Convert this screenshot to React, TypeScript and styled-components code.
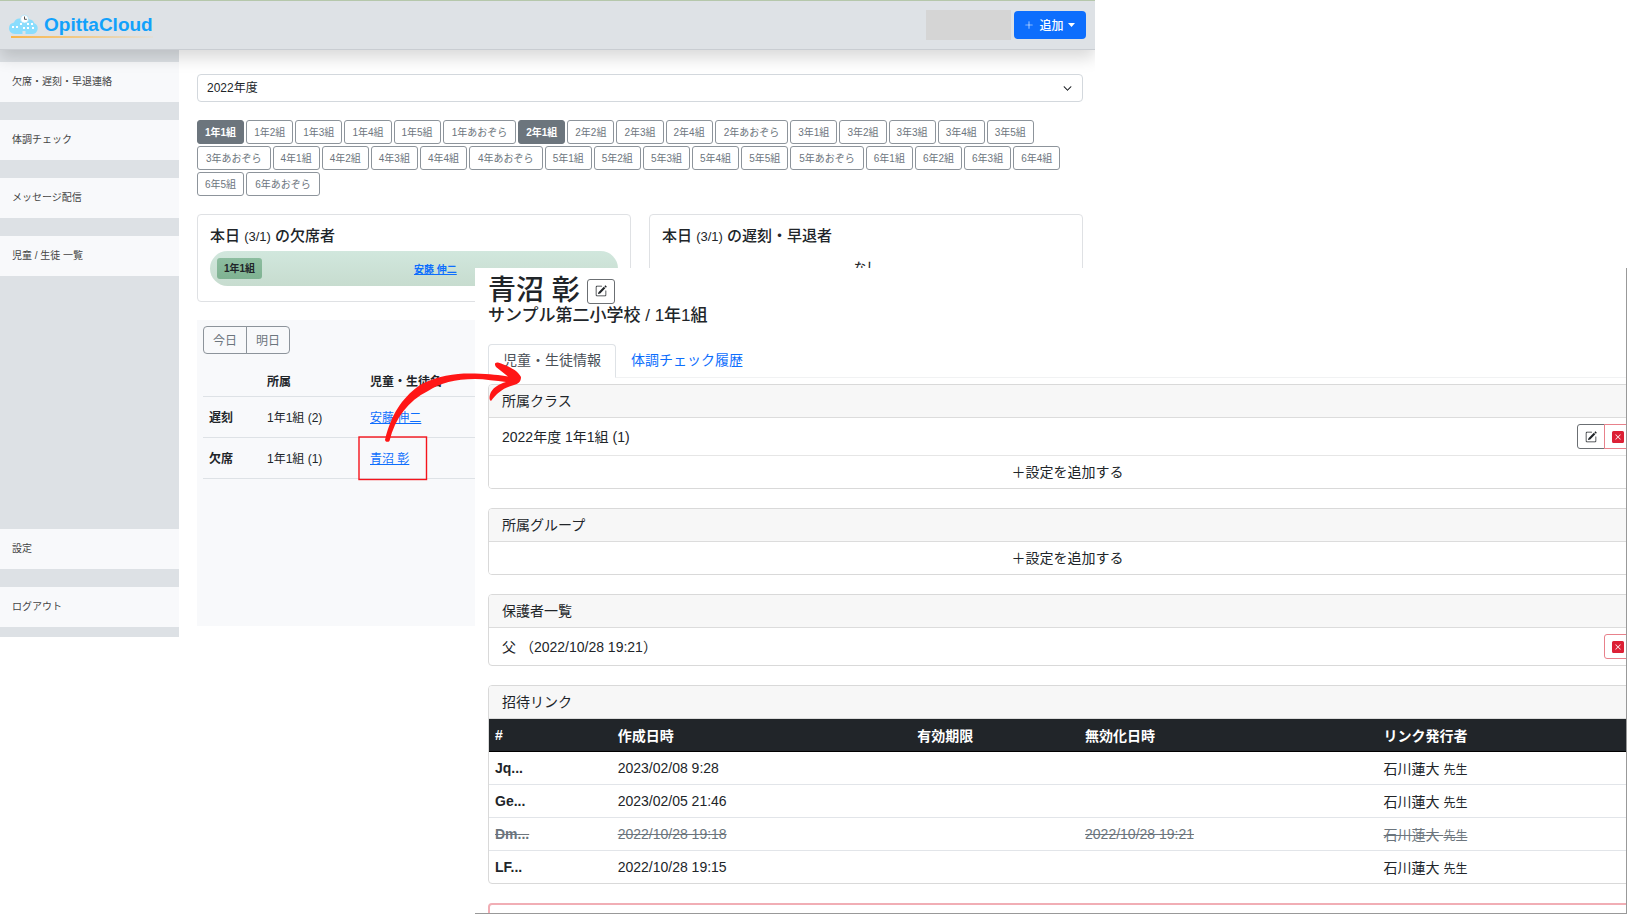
import React from "react";
import styled, { createGlobalStyle, css } from "styled-components";
import { BsPencilSquare, BsXSquareFill, BsPlusLg, BsChevronDown } from "react-icons/bs";

const GlobalStyle = createGlobalStyle`
  *, *::before, *::after { box-sizing: border-box; }
  body {
    margin: 0;
    background: #fff;
    color: #212529;
    font-family: "Liberation Sans", "Noto Sans CJK JP", sans-serif;
    font-size: 14px;
  }
  button, select { font: inherit; color: inherit; margin: 0; }
  a { color: #0d6efd; }
  h1, h2, p { margin: 0; font-weight: 500; }
`;

const Canvas = styled.div`
  position: relative;
  height: 100vh;
  overflow: hidden;
`;

/* ---------- dashboard window ---------- */

const Dashboard = styled.div`
  width: 67.3%;
  overflow: hidden;
  border-top: 1px solid #b5c7ab;
  font-size: 12px;
`;

const TopBar = styled.header`
  position: relative;
  z-index: 1;
  display: flex;
  align-items: center;
  justify-content: space-between;
  height: 49px;
  padding: 0 9px;
  background: #dee2e6;
  border-bottom: 1px solid #c9cdd2;
  box-shadow: 0 8px 16px rgba(0, 0, 0, 0.15);
`;

const Brand = styled.a`
  display: flex;
  align-items: center;
  gap: 6px;
  position: relative;
  height: 26px;
  color: #12a1fb;
  font-size: 19px;
  font-weight: 700;
  text-decoration: none;
  &::after {
    content: "";
    position: absolute;
    left: 2px;
    right: 0;
    bottom: 0;
    height: 2px;
    background: linear-gradient(90deg, #f9b54a, #efcf98 60%, #e2dfd9);
  }
`;

const TopActions = styled.div`
  display: flex;
  align-items: center;
  gap: 3px;
`;

const UserSlot = styled.div`
  width: 85px;
  height: 30px;
  background: #d5d5d5;
`;

const AddButton = styled.button`
  display: flex;
  align-items: center;
  justify-content: center;
  gap: 5px;
  width: 72px;
  height: 28px;
  padding: 0 0 1px;
  border: 0;
  border-radius: 4px;
  background: #0d6efd;
  color: #fff;
  font-weight: 500;
`;

const DashboardBody = styled.div`
  display: flex;
`;

const Sidebar = styled.nav`
  display: flex;
  flex-direction: column;
  gap: 18px;
  flex: none;
  width: 179px;
  padding: 12px 0 10px;
  background: #dde1e5;
`;

const SideLink = styled.a<{ $pushDown?: boolean }>`
  display: flex;
  align-items: center;
  height: 40px;
  padding: 0 0 3px 12px;
  margin-top: ${(p) => (p.$pushDown ? "auto" : "0")};
  background: #f8f9fb;
  color: #444;
  font-size: 10px;
  text-decoration: none;
`;

const Main = styled.main`
  display: flex;
  flex-direction: column;
  gap: 18px;
  flex: 1;
  min-width: 0;
  padding: 24px 12px 11px 18px;
`;

const SelectWrap = styled.div`
  position: relative;
  svg {
    position: absolute;
    right: 11px;
    top: 10px;
    pointer-events: none;
  }
`;

const YearSelect = styled.select`
  display: block;
  width: 100%;
  height: 28px;
  padding: 0 9px;
  border: 1px solid #d3d8dd;
  border-radius: 4px;
  background: #fff;
  appearance: none;
`;

const ClassList = styled.div`
  display: flex;
  flex-wrap: wrap;
  gap: 2px;
`;

const ClassButton = styled.button<{ $active: boolean; $wide: boolean }>`
  height: 24px;
  padding: 0 ${(p) => (p.$wide ? "8px" : "7px")} 2px;
  border: 1px solid #8d949b;
  border-radius: 3px;
  background: #fff;
  color: #6c757d;
  font-size: 10px;
  white-space: nowrap;
  ${(p) =>
    p.$active &&
    css`
      background: #6c757d;
      border-color: #6c757d;
      color: #fff;
      font-weight: 700;
    `}
`;

const CardRow = styled.div`
  display: grid;
  grid-template-columns: 1fr 1fr;
  gap: 18px;
`;

const SummaryCard = styled.section`
  min-height: 88px;
  padding: 11px 12px;
  border: 1px solid #dfe1e4;
  border-radius: 4px;
`;

const SummaryTitle = styled.h2`
  margin-bottom: 4px;
  font-size: 15px;
  line-height: 20px;
  small { font-size: 13px; }
`;

const AbsentPill = styled.div`
  display: grid;
  grid-template-columns: 1fr 1fr;
  align-items: center;
  height: 35px;
  padding: 0 7px;
  border-radius: 18px;
  background: linear-gradient(#d1e7dd, #c7dccf);
  font-size: 10px;
  font-weight: 700;
`;

const ClassBadge = styled.span`
  justify-self: start;
  padding: 0 7px;
  border-radius: 3px;
  background: linear-gradient(#8cbd9f, #7fb292);
  line-height: 21px;
`;

const EmptyNote = styled.p`
  line-height: 35px;
  text-align: center;
`;

const DayPanel = styled.section`
  min-height: 306px;
  padding: 6px;
  background: #f8f9fb;
`;

const DayToggle = styled.div`
  display: flex;
`;

const DayButton = styled.button`
  width: 44px;
  height: 28px;
  padding: 0 0 2px;
  border: 1px solid #8d949b;
  background: transparent;
  color: #6c757d;
  &:first-child { border-radius: 4px 0 0 4px; }
  &:last-child { border-radius: 0 4px 4px 0; margin-left: -1px; }
`;

const DayTable = styled.table`
  width: 100%;
  margin-top: 1px;
  border-collapse: collapse;
  table-layout: fixed;
  text-align: left;
  th, td {
    height: 41px;
    padding: 0 6px;
    border-bottom: 1px solid #dee2e6;
  }
  th:nth-child(1) { width: 58px; }
  th:nth-child(2) { width: 103px; }
  thead th { padding-top: 10px; }
`;

/* ---------- student detail window ---------- */

const Detail = styled.div`
  position: absolute;
  left: 475px;
  right: 0;
  top: 268px;
  bottom: 0;
  overflow: hidden;
  background: #fff;
  border: solid #999;
  border-width: 0 1px 1px 0;
`;

const DetailContent = styled.div`
  margin-right: -21px;
  padding: 9px 0 0 13px;
`;

const NameRow = styled.div`
  display: flex;
  align-items: center;
  gap: 7px;
  height: 28px;
`;

const StudentName = styled.h1`
  font-size: 28px;
  line-height: 28px;
`;

const School = styled.p`
  font-size: 17px;
  line-height: 22px;
`;

const IconButton = styled.button<{ $danger?: boolean }>`
  display: flex;
  align-items: center;
  justify-content: center;
  width: 28px;
  height: 25px;
  padding: 0;
  border: 1px solid ${(p) => (p.$danger ? "#e8818b" : "#6b6f73")};
  border-radius: 3px;
  background: #fff;
  color: ${(p) => (p.$danger ? "#dc2035" : "#212529")};
`;

const IconGroup = styled.div`
  display: flex;
  ${IconButton}:not(:last-child) { border-radius: 3px 0 0 3px; }
  ${IconButton} + ${IconButton} { border-radius: 0 3px 3px 0; margin-left: -1px; }
`;

const Tabs = styled.div`
  display: flex;
  height: 34px;
  margin: 17px 0 6px;
  border-bottom: 1px solid #f1f2f3;
`;

const Tab = styled.button<{ $active?: boolean }>`
  height: 34px;
  padding: 0 14px 4px;
  border: 1px solid transparent;
  border-radius: 4px 4px 0 0;
  background: transparent;
  color: #0d6efd;
  ${(p) =>
    p.$active &&
    css`
      border-color: #dee2e6 #dee2e6 #fff;
      background: #fff;
      color: #495057;
    `}
`;

const Card = styled.section<{ $danger?: boolean }>`
  margin-bottom: 19px;
  overflow: hidden;
  min-height: 34px;
  border: ${(p) => (p.$danger ? "2px solid #f1aeb5" : "1px solid #d9d9d9")};
  border-radius: 4px;
`;

const CardHeader = styled.h2`
  padding: 0 13px;
  border-bottom: 1px solid #dcdcdc;
  background: #f7f7f7;
  font-size: 14px;
  font-weight: 400;
  line-height: 32px;
`;

const Item = styled.div`
  display: flex;
  align-items: center;
  justify-content: space-between;
  height: 37px;
  padding: 0 14px 0 13px;
`;

const ItemText = styled.span`
  padding-bottom: 2px;
`;

const AddSetting = styled.button<{ $divided?: boolean }>`
  display: block;
  width: 100%;
  height: ${(p) => (p.$divided ? "33px" : "32px")};
  padding: 0 0 2px;
  border: 0;
  border-top: ${(p) => (p.$divided ? "1px solid #e6e6e6" : "0")};
  background: #fff;
`;

const InviteTable = styled.table`
  width: 100%;
  border-collapse: collapse;
  table-layout: fixed;
  text-align: left;
  th, td {
    height: 33px;
    padding: 0 6px;
    border-bottom: 1px solid #e2e5e9;
  }
  thead th {
    height: 32px;
    background: #212529;
    border-color: #000;
    color: #fff;
  }
  tbody tr:last-child > * { border-bottom: 0; }
  small { font-size: 12px; }
`;

const InviteRow = styled.tr<{ $disabled: boolean }>`
  ${(p) =>
    p.$disabled &&
    css`
      color: #6c757d;
      text-decoration: line-through;
    `}
`;

/* ---------- annotation drawn over both windows ---------- */

const Annotation = styled.svg`
  position: absolute;
  left: 350px;
  top: 350px;
  pointer-events: none;
`;

const LogoMark = () => (
  <svg width="29" height="22" viewBox="0 0 29 22" aria-hidden="true">
    <path
      d="M6 20C2.500 20 0 17.500 0 14.300 0 11 2 9 5 8.500 6 5.500 8.500 4 11.500 4.500 14 3 18 3 20.500 5.500 23 5.500 24.500 7 25 9 27.500 10 29 12 28.700 15 28.300 18 26 20 23 20H16.500V17H13.500V20Z"
      fill="#8addfd"
    />
    <g fill="#fff">
      <rect x="3" y="12" width="2" height="2" />
      <rect x="7" y="12" width="2" height="2" />
      <rect x="11" y="9" width="2" height="2" />
      <rect x="14" y="13" width="2" height="2" />
      <rect x="18" y="9" width="2" height="2" />
      <rect x="18" y="13" width="2" height="2" />
      <rect x="22" y="9" width="2" height="2" />
      <rect x="23" y="13" width="2" height="2" />
      <circle cx="15.500" cy="5" r="4" stroke="#a5e0f8" strokeWidth="0.700" />
    </g>
    <path d="M15.500 2.500V5.300H17.800" fill="none" stroke="#444" strokeWidth="0.900" />
  </svg>
);

const Caret = () => (
  <svg width="7" height="4" viewBox="0 0 7 4" aria-hidden="true">
    <path d="M0 0H7L3.500 4Z" fill="currentColor" />
  </svg>
);

const classes = [1, 2, 3, 4, 5, 6].flatMap((grade) => {
  const count = grade === 2 || grade === 4 ? 4 : 5;
  const rooms = Array.from({ length: count }, (_, i) => `${grade}年${i + 1}組`);
  return [...rooms, `${grade}年あおぞら`];
});

const activeClasses = ["1年1組", "2年1組"];

const invites = [
  { id: "Jq...", created: "2023/02/08 9:28", revoked: "" },
  { id: "Ge...", created: "2023/02/05 21:46", revoked: "" },
  { id: "Dm...", created: "2022/10/28 19:18", revoked: "2022/10/28 19:21" },
  { id: "LF...", created: "2022/10/28 19:15", revoked: "" },
];

export default function App() {
  return (
    <>
      <GlobalStyle />
      <Canvas>
        <Dashboard>
          <TopBar>
            <Brand href="#">
              <LogoMark />
              OpittaCloud
            </Brand>
            <TopActions>
              <UserSlot />
              <AddButton>
                <BsPlusLg size={10} />
                追加
                <Caret />
              </AddButton>
            </TopActions>
          </TopBar>
          <DashboardBody>
            <Sidebar>
              <SideLink href="#">欠席・遅刻・早退連絡</SideLink>
              <SideLink href="#">体調チェック</SideLink>
              <SideLink href="#">メッセージ配信</SideLink>
              <SideLink href="#">児童 / 生徒 一覧</SideLink>
              <SideLink href="#" $pushDown>設定</SideLink>
              <SideLink href="#">ログアウト</SideLink>
            </Sidebar>
            <Main>
              <SelectWrap>
                <YearSelect aria-label="年度" defaultValue="2022">
                  <option value="2022">2022年度</option>
                </YearSelect>
                <BsChevronDown size={9} strokeWidth={1} />
              </SelectWrap>
              <ClassList>
                {classes.map((name) => (
                  <ClassButton
                    key={name}
                    $active={activeClasses.includes(name)}
                    $wide={name.endsWith("あおぞら")}
                  >
                    {name}
                  </ClassButton>
                ))}
              </ClassList>
              <CardRow>
                <SummaryCard>
                  <SummaryTitle>
                    本日 <small>(3/1)</small> の欠席者
                  </SummaryTitle>
                  <AbsentPill>
                    <ClassBadge>1年1組</ClassBadge>
                    <a href="#">安藤 伸二</a>
                  </AbsentPill>
                </SummaryCard>
                <SummaryCard>
                  <SummaryTitle>
                    本日 <small>(3/1)</small> の遅刻・早退者
                  </SummaryTitle>
                  <EmptyNote>なし</EmptyNote>
                </SummaryCard>
              </CardRow>
              <DayPanel>
                <DayToggle>
                  <DayButton>今日</DayButton>
                  <DayButton>明日</DayButton>
                </DayToggle>
                <DayTable>
                  <thead>
                    <tr>
                      <th />
                      <th>所属</th>
                      <th>児童・生徒名</th>
                    </tr>
                  </thead>
                  <tbody>
                    <tr>
                      <th>遅刻</th>
                      <td>1年1組 (2)</td>
                      <td><a href="#">安藤 伸二</a></td>
                    </tr>
                    <tr>
                      <th>欠席</th>
                      <td>1年1組 (1)</td>
                      <td><a href="#">青沼 彰</a></td>
                    </tr>
                  </tbody>
                </DayTable>
              </DayPanel>
            </Main>
          </DashboardBody>
        </Dashboard>

        <Detail>
          <DetailContent>
            <NameRow>
              <StudentName>青沼 彰</StudentName>
              <IconButton aria-label="編集"><BsPencilSquare size={12} /></IconButton>
            </NameRow>
            <School>サンプル第二小学校 / 1年1組</School>
            <Tabs>
              <Tab $active>児童・生徒情報</Tab>
              <Tab>体調チェック履歴</Tab>
            </Tabs>

            <Card>
              <CardHeader>所属クラス</CardHeader>
              <Item>
                <ItemText>2022年度 1年1組 (1)</ItemText>
                <IconGroup>
                  <IconButton aria-label="編集"><BsPencilSquare size={12} /></IconButton>
                  <IconButton $danger aria-label="削除"><BsXSquareFill size={12} /></IconButton>
                </IconGroup>
              </Item>
              <AddSetting $divided>＋設定を追加する</AddSetting>
            </Card>

            <Card>
              <CardHeader>所属グループ</CardHeader>
              <AddSetting>＋設定を追加する</AddSetting>
            </Card>

            <Card>
              <CardHeader>保護者一覧</CardHeader>
              <Item>
                <ItemText>父 （2022/10/28 19:21）</ItemText>
                <IconButton $danger aria-label="削除"><BsXSquareFill size={12} /></IconButton>
              </Item>
            </Card>

            <Card>
              <CardHeader>招待リンク</CardHeader>
              <InviteTable>
                <colgroup>
                  <col width="10.6%" />
                  <col width="25.9%" />
                  <col width="14.5%" />
                  <col width="25.8%" />
                  <col />
                </colgroup>
                <thead>
                  <tr>
                    <th>#</th>
                    <th>作成日時</th>
                    <th>有効期限</th>
                    <th>無効化日時</th>
                    <th>リンク発行者</th>
                  </tr>
                </thead>
                <tbody>
                  {invites.map((invite) => (
                    <InviteRow key={invite.id} $disabled={invite.revoked !== ""}>
                      <th>{invite.id}</th>
                      <td>{invite.created}</td>
                      <td />
                      <td>{invite.revoked}</td>
                      <td>石川蓮大 <small>先生</small></td>
                    </InviteRow>
                  ))}
                </tbody>
              </InviteTable>
            </Card>

            <Card $danger />
          </DetailContent>
        </Detail>

        <Annotation width="180" height="140" viewBox="0 0 180 140" aria-hidden="true">
          <rect x="9" y="87" width="67.500" height="42.500" fill="none" stroke="#f5141c" strokeWidth="1.400" />
          <path
            d="M35 90C42 60 56 45 70 35C90 24 110 23 125 23.500C140 24 150 25 158 26.500L146 17C144 14 145 12 148 12.500C158 16 168 20 171 27C171 32 168 34 164 35C153 38 147 43 141 51C139 50 139 46 141 42C144 37 149 34 156 32C146 31 135 29 125 29C105 29 90 33 78 41C58 51 45 68 39.500 91C38 92.500 35.500 92 35 90Z"
            fill="#ff1616"
          />
        </Annotation>
      </Canvas>
    </>
  );
}
